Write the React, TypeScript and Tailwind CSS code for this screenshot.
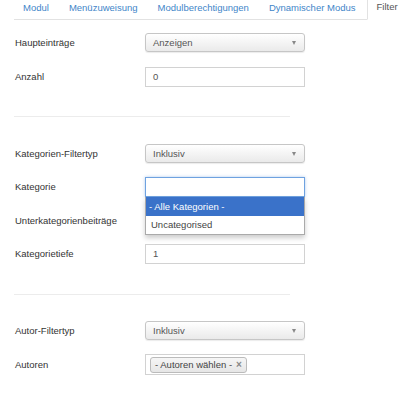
import React from "react";

const font = { fontFamily: '"Liberation Sans", Arial, sans-serif' };

function Select({ value }: { value: string }) {
  return (
    <div className="relative flex h-[19px] w-[160px] items-center rounded-[3px] border border-[#c6c6c6] bg-gradient-to-b from-[#ffffff] to-[#eaeaea] pl-[7px] text-[#555] shadow-[0_1px_1px_rgba(0,0,0,0.08)]">
      <span>{value}</span>
      <span className="absolute right-[8px] top-[7px] h-0 w-0 border-l-[2.5px] border-r-[2.5px] border-t-[4px] border-l-transparent border-r-transparent border-t-[#888]" />
    </div>
  );
}

function Input({ value, focused }: { value?: string; focused?: boolean }) {
  return (
    <div
      className={
        "flex h-[20px] w-[160px] items-center border bg-white pl-[7px] text-[#555] " +
        (focused
          ? "border-[#6fa2e0] shadow-[0_0_3px_rgba(80,140,220,0.45)]"
          : "border-[#d2d2d2]")
      }
    >
      {value}
    </div>
  );
}

function Row({ label, children }: { label: string; children: React.ReactNode }) {
  return (
    <div className="flex items-center">
      <div className="w-[145px] shrink-0 whitespace-nowrap pl-[15px] text-[#333]">{label}</div>
      {children}
    </div>
  );
}

export default function App() {
  const tabs = ["Modul", "Menüzuweisung", "Modulberechtigungen", "Dynamischer Modus"];
  return (
    <div className="h-[407px] w-[400px] overflow-hidden bg-white text-[9.5px] leading-none" style={font}>
      <div className="ml-[14px] flex h-[20px] items-end border-b border-[#e2e2e2]">
        {tabs.map((t) => (
          <div key={t} className="mr-[2px] flex h-[19px] shrink-0 items-center whitespace-nowrap px-[9px] pb-[4px] text-[#3f86c9]">
            {t}
          </div>
        ))}
        <div className="-mb-px flex h-[22px] shrink-0 items-center whitespace-nowrap border border-b-white border-[#e2e2e2] bg-white px-[9px] pb-[4px] text-[#555]">
          Filter
        </div>
      </div>

      <div className="pt-[13px]">
        <Row label="Haupteinträge">
          <Select value="Anzeigen" />
        </Row>
        <div className="h-[15px]" />
        <Row label="Anzahl">
          <Input value="0" />
        </Row>
        <div className="ml-[14px] mt-[29px] h-px w-[276px] bg-[#ececec]" />
        <div className="h-[27px]" />
        <Row label="Kategorien-Filtertyp">
          <Select value="Inklusiv" />
        </Row>
        <div className="h-[14px]" />
        <Row label="Kategorie">
          <div className="relative">
            <Input focused />
            <div className="absolute left-0 top-[20px] z-10 w-[160px] border border-t-0 border-[#aaa] bg-white shadow-[0_3px_5px_rgba(0,0,0,0.2)]">
              <div className="flex h-[19px] items-center bg-[#3a72c9] pl-[3px] text-white">- Alle Kategorien -</div>
              <div className="flex h-[18px] items-center pl-[5px] text-[#444]">Uncategorised</div>
            </div>
          </div>
        </Row>
        <div className="h-[14px]" />
        <Row label="Unterkategorienbeiträge">
          <div className="h-[20px] w-[160px]" />
        </Row>
        <div className="h-[13px]" />
        <Row label="Kategorietiefe">
          <Input value="1" />
        </Row>
        <div className="ml-[14px] mt-[30px] h-px w-[276px] bg-[#ececec]" />
        <div className="h-[26px]" />
        <Row label="Autor-Filtertyp">
          <Select value="Inklusiv" />
        </Row>
        <div className="h-[14px]" />
        <Row label="Autoren">
          <div className="flex h-[21px] w-[160px] items-center border border-[#d2d2d2] bg-white pl-[4px]">
            <div className="flex h-[16px] items-center rounded-[3px] border border-[#bbb] bg-gradient-to-b from-[#f6f6f6] to-[#e6e6e6] px-[4px] text-[#444]">
              <span>- Autoren wählen -</span>
              <span className="ml-[4px] text-[10px] font-bold text-[#888]">×</span>
            </div>
          </div>
        </Row>
      </div>
    </div>
  );
}
